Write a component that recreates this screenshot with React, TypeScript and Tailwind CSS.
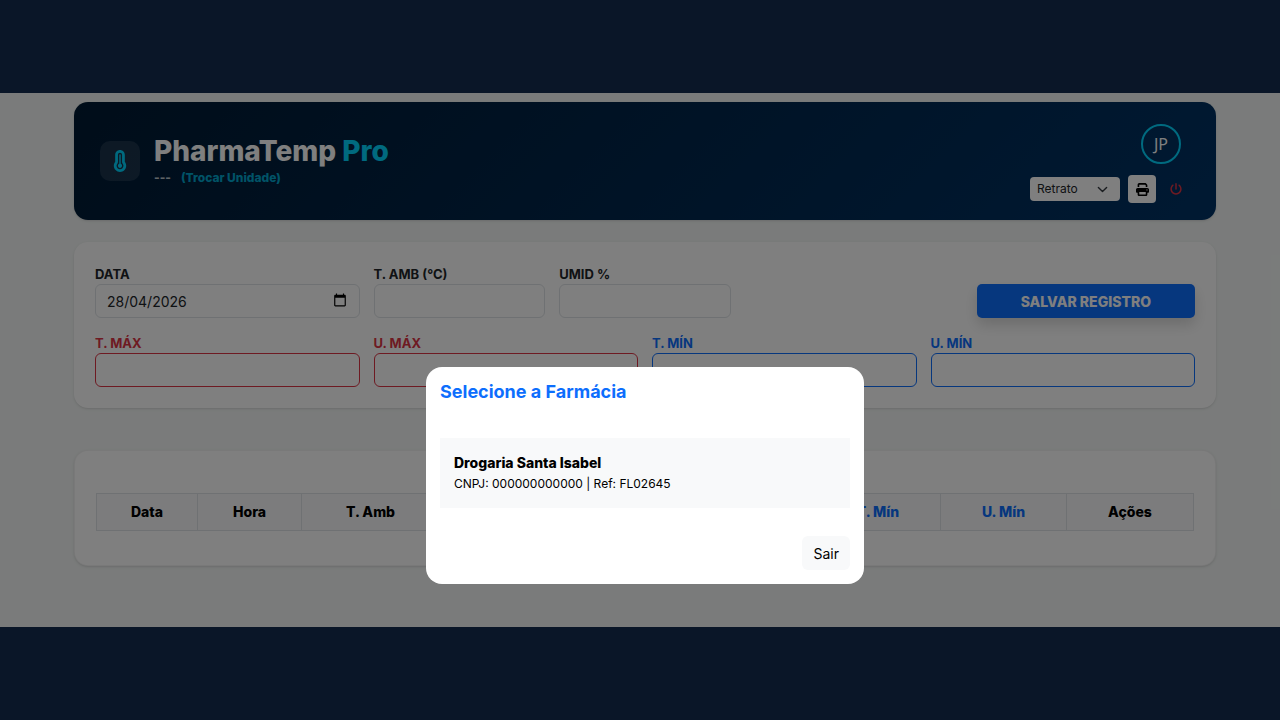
import { useState } from 'react'
import { FaPowerOff, FaPrint, FaTemperatureFull } from 'react-icons/fa6'

interface Farmacia {
  nome: string
  cnpj: string
  ref: string
}

const FARMACIAS: Farmacia[] = [
  { nome: 'Drogaria Santa Isabel', cnpj: '000000000000', ref: 'FL02645' },
]

const EXTREMOS = [
  { id: 'tmax', label: 'T. MÁX', text: 'text-[#dc3545]', border: 'border-[#dc3545]' },
  { id: 'umax', label: 'U. MÁX', text: 'text-[#dc3545]', border: 'border-[#dc3545]' },
  { id: 'tmin', label: 'T. MÍN', text: 'text-[#0d6efd]', border: 'border-[#0d6efd]' },
  { id: 'umin', label: 'U. MÍN', text: 'text-[#0d6efd]', border: 'border-[#0d6efd]' },
]

const COLUNAS = [
  { label: 'Data',   cls: 'w-[101px]' },
  { label: 'Hora',   cls: 'w-[104px]' },
  { label: 'T. Amb', cls: 'w-[138px]' },
  { label: 'Umid',   cls: '' },
  { label: 'T. Máx', cls: 'text-[#dc3545]' },
  { label: 'U. Máx', cls: 'text-[#dc3545]' },
  { label: 'T. Mín', cls: 'text-[#0d6efd]' },
  { label: 'U. Mín', cls: 'w-[126px] text-[#0d6efd]' },
  { label: 'Ações',  cls: 'w-[127px]' },
]

const LABEL = 'block text-[13px] leading-5 font-bold'
const INPUT = 'block w-full h-[34px] rounded-md border bg-white px-[11px] text-[14px] text-[#212529]'

function Header() {
  return (
    <header className="flex items-center justify-between rounded-[14px] bg-linear-135 from-[#001a33] to-[#003366] px-[26px] py-[17px] shadow-sm">
      <div className="flex items-center gap-[14px]">
        <div className="flex size-10 items-center justify-center rounded-[10px] bg-white/10 text-[#00d4ff]">
          <FaTemperatureFull size={22} />
        </div>
        <div>
          <h1 className="text-[28px] leading-[34px] font-extrabold text-white">
            PharmaTemp <span className="text-[#00d4ff]">Pro</span>
          </h1>
          <p className="flex gap-[10px] text-[12px] leading-5 font-extrabold text-white/75">
            <span>---</span>
            <a href="#unidade" className="text-[#00d4ff]/75">(Trocar Unidade)</a>
          </p>
        </div>
      </div>

      <div className="flex flex-col items-end gap-[11px] pt-[5px]">
        <div className="mr-[9px] flex size-10 items-center justify-center rounded-full border-2 border-[#00d4ff] font-['Noto_Sans'] text-[16px] text-white">
          JP
        </div>
        <div className="flex items-center gap-2">
          <div className="relative">
            <select aria-label="Orientação" className="block h-6 w-[90px] appearance-none rounded-sm bg-white pl-[7px] text-[12px] text-[#212529]">
              <option>Retrato</option>
              <option>Paisagem</option>
            </select>
            <svg viewBox="0 0 16 16" className="pointer-events-none absolute top-[7px] right-3 size-[11px]" fill="none" stroke="#343a40" strokeWidth="2" strokeLinecap="round" strokeLinejoin="round">
              <path d="m2 5 6 6 6-6" />
            </svg>
          </div>
          <button type="button" aria-label="Imprimir" className="flex h-7 w-7 items-center justify-center rounded-sm bg-white text-black">
            <FaPrint size={13} />
          </button>
          <button type="button" aria-label="Sair do sistema" className="flex h-7 w-[26px] items-center justify-start pl-[6px] text-[#dc3545]">
            <FaPowerOff size={12} />
          </button>
        </div>
      </div>
    </header>
  )
}

function Registro() {
  const [data, setData] = useState('28/04/2026')

  return (
    <form className="mt-[22px] grid grid-cols-12 gap-x-[14px] gap-y-[15px] rounded-[14px] bg-white px-[21px] pt-[22px] pb-[21px] shadow-sm">
      <div className="col-span-3">
        <label htmlFor="data" className={`${LABEL} text-[#212529]`}>DATA</label>
        <div className="relative">
          <input id="data" value={data} onChange={e => setData(e.target.value)} className={`${INPUT} border-[#dee2e6]`} />
          <svg viewBox="0 0 24 24" className="pointer-events-none absolute top-[9px] right-[13px] size-[14px]" fill="#000">
            <path d="M20 3h-1V1h-2v2H7V1H5v2H4c-1.100 0-2 .9-2 2v16c0 1.100.9 2 2 2h16c1.100 0 2-.9 2-2V5c0-1.100-.9-2-2-2zm0 18H4V8h16v13z" />
          </svg>
        </div>
      </div>
      <div className="col-span-2">
        <label htmlFor="tamb" className={`${LABEL} text-[#212529]`}>T. AMB (°C)</label>
        <input id="tamb" className={`${INPUT} border-[#dee2e6]`} />
      </div>
      <div className="col-span-2">
        <label htmlFor="umid" className={`${LABEL} text-[#212529]`}>UMID %</label>
        <input id="umid" className={`${INPUT} border-[#dee2e6]`} />
      </div>
      <div className="col-span-5 flex items-end justify-end">
        <button type="button" className="h-[34px] rounded-[5px] bg-[#0d6efd] px-11 text-[14px] font-extrabold text-white shadow-[0_7px_14px_rgba(0,0,0,0.15)]">
          SALVAR REGISTRO
        </button>
      </div>

      {EXTREMOS.map(c => (
        <div key={c.id} className="col-span-3">
          <label htmlFor={c.id} className={`${LABEL} ${c.text}`}>{c.label}</label>
          <input id={c.id} className={`${INPUT} ${c.border}`} />
        </div>
      ))}
    </form>
  )
}

function Tabela() {
  return (
    <section className="mt-[42px] rounded-[14px] border border-black/5 bg-white px-[21px] pt-[42px] pb-[34px] shadow-sm">
      <table className="w-full table-fixed border-collapse text-center text-[14px] leading-5">
        <thead>
          <tr className="bg-[#f8f9fa] text-black">
            {COLUNAS.map(c => (
              <th key={c.label} className={`border border-[#dee2e6] py-2 font-extrabold ${c.cls}`}>{c.label}</th>
            ))}
          </tr>
        </thead>
      </table>
    </section>
  )
}

function SelecionarFarmacia() {
  return (
    <div role="dialog" aria-labelledby="titulo-modal" className="w-[438px] rounded-[16px] bg-white p-[14px]">
      <h2 id="titulo-modal" className="text-[18px] leading-[22px] font-bold text-[#0d6efd]">Selecione a Farmácia</h2>
      <div className="mt-[35px]">
        {FARMACIAS.map(f => (
          <button key={f.ref} type="button" className="block w-full bg-[#f8f9fa] p-[14px] text-left text-black">
            <span className="block text-[14px] leading-[22px] font-extrabold">{f.nome}</span>
            <span className="block text-[12px] leading-5">CNPJ: {f.cnpj} | Ref: {f.ref}</span>
          </button>
        ))}
      </div>
      <div className="mt-7 flex justify-end">
        <button type="button" className="h-[34px] rounded-md bg-[#f8f9fa] px-[11px] text-[14px] text-black">Sair</button>
      </div>
    </div>
  )
}

export default function App() {
  return (
    <div className="flex min-h-screen flex-col justify-center bg-[#0a1628] font-[Inter,sans-serif]">
      <main className="relative bg-[#f4f7f6] pt-[9px] pr-16 pb-[61px] pl-[74px]">
        <Header />
        <Registro />
        <Tabela />
        <div className="absolute inset-0 flex items-end justify-center bg-black/50 pb-[43px] pl-[10px]">
          <SelecionarFarmacia />
        </div>
      </main>
    </div>
  )
}
